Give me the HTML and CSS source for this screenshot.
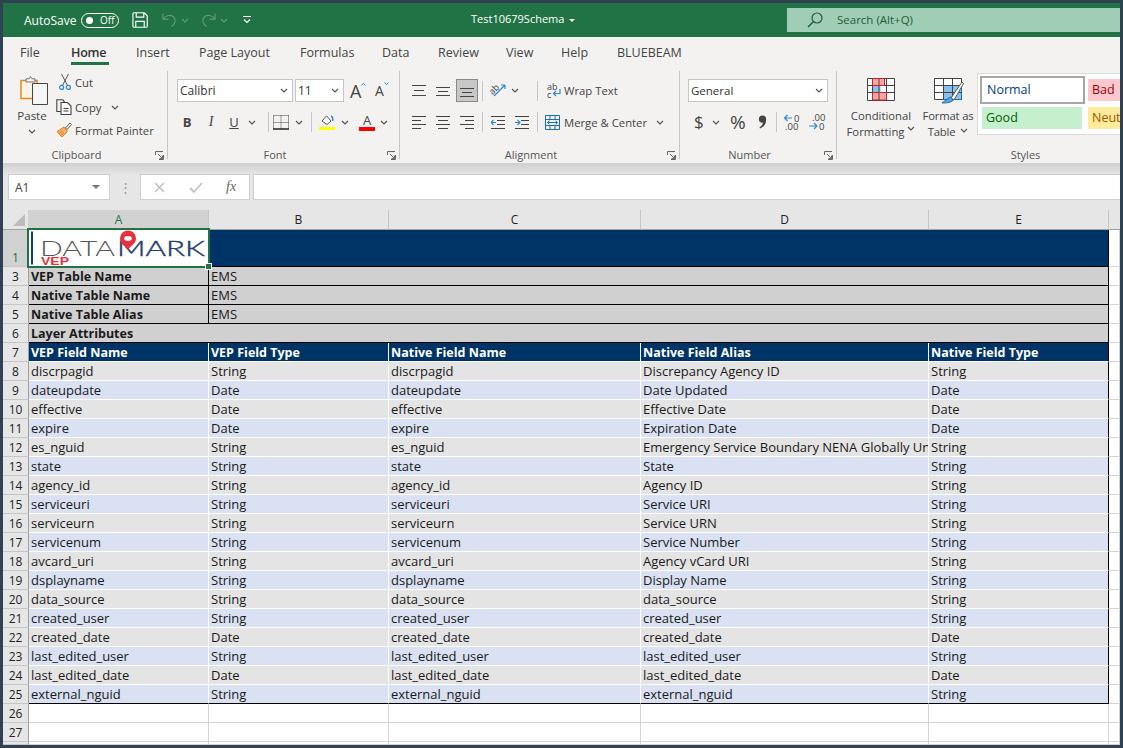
FILE: index.html
```html
<!DOCTYPE html>
<html lang="en">
<head>
<meta charset="utf-8">
<title>Test10679Schema</title>
<link rel="stylesheet" href="styles.css">
</head>
<body>
<svg class="defs" width="0" height="0" aria-hidden="true">
  <symbol id="chev" viewBox="0 0 8 5"><path d="M1 1l3 3 3-3" fill="none" stroke="currentColor" stroke-width="1.2"/></symbol>
  <symbol id="launch" viewBox="0 0 9 9"><path d="M.5 4V.5H8M8.5 4v4.5H4M3 3l4 4M7.5 4.5v3h-3" fill="none" stroke="#666"/></symbol>
  <symbol id="a-top" viewBox="0 0 14 14"><path d="M0 1.5h14M2 6.5h10M0 11.5h14" stroke="#444" fill="none"/></symbol>
  <symbol id="a-mid" viewBox="0 0 14 14"><path d="M0 3.5h14M2 7.5h10M0 11.5h14" stroke="#444" fill="none"/></symbol>
  <symbol id="a-bot" viewBox="0 0 14 14"><path d="M0 4.5h14M2 8.5h10M0 12.5h14" stroke="#444" fill="none"/></symbol>
  <symbol id="h-left" viewBox="0 0 14 14"><path d="M0 1.5h14M0 5.5h9M0 9.5h14M0 13.5h9" stroke="#444" fill="none"/></symbol>
  <symbol id="h-mid" viewBox="0 0 14 14"><path d="M0 1.5h14M2 5.5h10M0 9.5h14M2 13.5h10" stroke="#444" fill="none"/></symbol>
  <symbol id="h-right" viewBox="0 0 14 14"><path d="M0 1.5h14M5 5.5h9M0 9.5h14M5 13.5h9" stroke="#444" fill="none"/></symbol>
</svg>
<div class="window">

  <header class="titlebar">
    <span class="autosave">AutoSave</span>
    <span class="toggle"><i class="knob"></i><span>Off</span></span>
    <svg class="ic-save" width="16" height="16" viewBox="0 0 17 17"><path d="M2 .8h11l3.2 3.2v11.2a1 1 0 0 1-1 1H2a1 1 0 0 1-1-1V1.800a1 1 0 0 1 1-1zM4.500 1v4.500h8V1M4 16v-6h9v6" fill="none" stroke="#fff" stroke-width="1.200"/></svg>
    <svg class="ic-undo" width="15" height="16" viewBox="0 0 16 16"><path d="M1 1v6h6M1.500 6.500C4 3 9 2 12 4.500c3.300 2.800 2.500 7.500-2 10.500" fill="none" stroke="#5c9a7a" stroke-width="1.200"/></svg>
    <svg class="ic-chev dim"><use href="#chev"/></svg>
    <svg class="ic-redo" width="15" height="16" viewBox="0 0 16 16"><path d="M15 1v6H9M14.500 6.500C12 3 7 2 4 4.500.7 7.300 1.500 12 6 15" fill="none" stroke="#5c9a7a" stroke-width="1.200"/></svg>
    <svg class="ic-chev dim"><use href="#chev"/></svg>
    <svg class="ic-qat" width="8" height="8" viewBox="0 0 8 8"><path d="M0 .5h8M1 3.500l3 3 3-3" fill="none" stroke="#fff" stroke-width="1.100"/></svg>
    <span class="doc-title">Test10679Schema</span>
    <i class="caret-white"></i>
    <div class="search">
      <svg width="16" height="16" viewBox="0 0 16 16"><circle cx="10" cy="6" r="5" fill="none" stroke="#1f5d3c" stroke-width="1.200"/><path d="M6.300 9.700L1 15" stroke="#1f5d3c" stroke-width="1.400"/></svg>
      <span>Search (Alt+Q)</span>
    </div>
  </header>

  <nav class="tabs">
    <span class="tab t-file">File</span>
    <span class="tab t-home">Home</span>
    <span class="tab t-insert">Insert</span>
    <span class="tab t-layout">Page Layout</span>
    <span class="tab t-formulas">Formulas</span>
    <span class="tab t-data">Data</span>
    <span class="tab t-review">Review</span>
    <span class="tab t-view">View</span>
    <span class="tab t-help">Help</span>
    <span class="tab t-blue">BLUEBEAM</span>
  </nav>

  <section class="ribbon">
    <div class="group g-clip">
      <div class="clip-body">
        <div class="paste">
          <svg class="paste-ic" width="28" height="30" viewBox="0 0 28 30"><path d="M1 5.500h16v18H1z" fill="#fbf3e6" stroke="#e08a1e" stroke-width="1.500"/><path d="M6 5.500V3.800h3L10.500 1.500 12 3.800h3v3.200H6z" fill="#f3f2f1" stroke="#777"/><path d="M12.500 8.500h15v21h-15z" fill="#f7f7f7" stroke="#444"/></svg>
          <span class="paste-label">Paste</span>
          <svg class="ic-chev"><use href="#chev"/></svg>
        </div>
        <div class="clip-list">
          <div class="clip-item clip-cut">
            <svg width="12" height="16" viewBox="0 0 12 16"><path d="M2.500 0l6 11.500M9.500 0l-6 11.500" stroke="#555" fill="none"/><circle cx="2.600" cy="13.400" r="2" fill="none" stroke="#2b88d8" stroke-width="1.200"/><circle cx="9.400" cy="13.400" r="2" fill="none" stroke="#2b88d8" stroke-width="1.200"/></svg>
            <span>Cut</span>
          </div>
          <div class="clip-item clip-copy">
            <svg width="16" height="16" viewBox="0 0 16 16"><path d="M5 12.500H.8V.8h6l2 2.500" fill="none" stroke="#444" stroke-width="1.100"/><path d="M5 3.500h6.500l3.500 3.500v8.500H5z" fill="#f8f8f8" stroke="#444" stroke-width="1.100"/><path d="M7.500 9.500h5M7.500 12h5" stroke="#444"/></svg>
            <span>Copy</span>
            <svg class="ic-chev push"><use href="#chev"/></svg>
          </div>
          <div class="clip-item clip-fp">
            <svg width="16" height="16" viewBox="0 0 16 16"><path d="M1 9.500L8 5l3.500 4.500L6 15z" fill="#f4b26a" stroke="#e0821e"/><path d="M3 11.500l4-2.500M4.500 13.500L8 11" stroke="#e0821e"/><path d="M9.500 6l4.500-5 1.500 1.500-4.500 5z" fill="#fff" stroke="#555"/></svg>
            <span>Format Painter</span>
          </div>
        </div>
      </div>
      <div class="glabel gl-offset">Clipboard</div>
      <svg class="launcher"><use href="#launch"/></svg>
    </div>

    <div class="group g-font">
      <div class="row row-1">
        <div class="select w-font"><span>Calibri</span><svg class="ic-chev"><use href="#chev"/></svg></div>
        <div class="select w-size"><span>11</span><svg class="ic-chev"><use href="#chev"/></svg></div>
        <span class="grow-a">A<svg width="5" height="3" viewBox="0 0 5 3"><path d="M.5 2.500l2-2 2 2" fill="none" stroke="#2b88d8"/></svg></span>
        <span class="shrink-a">A<svg width="5" height="3" viewBox="0 0 5 3"><path d="M.5.500l2 2 2-2" fill="none" stroke="#2b88d8"/></svg></span>
      </div>
      <div class="row row-2 font-tools">
        <span class="fmt fmt-b">B</span>
        <span class="fmt fmt-i">I</span>
        <span class="fmt fmt-u">U</span>
        <svg class="ic-chev m-u"><use href="#chev"/></svg>
        <i class="vsep m-s1"></i>
        <svg class="m-bd" width="16" height="15" viewBox="0 0 16 15"><path d="M.5.500h15M.5 7.500h15M8 .5v13M.5.500v13M15.500.5v13" stroke="#444" stroke-dasharray="1 1" fill="none"/><path d="M0 14h16" stroke="#222" stroke-width="1.500"/></svg>
        <svg class="ic-chev m-c6"><use href="#chev"/></svg>
        <i class="vsep m-s2"></i>
        <svg class="m-fill" width="16" height="16" viewBox="0 0 16 16"><path d="M3 7l4.500-5L12 7l-4 3.500z" fill="#fff" stroke="#555"/><path d="M12 2c2 1 2 3 1.500 5" stroke="#2b88d8" stroke-width="1.500" fill="none"/><path d="M0 13h16v3H0z" fill="#ffff00"/></svg>
        <svg class="ic-chev m-c6"><use href="#chev"/></svg>
        <span class="color-a"><span>A</span><i></i></span>
        <svg class="ic-chev m-c5"><use href="#chev"/></svg>
      </div>
      <div class="glabel gl-offset">Font</div>
      <svg class="launcher"><use href="#launch"/></svg>
    </div>

    <div class="group g-align">
      <div class="align-grid">
        <div class="row a-row-1">
          <svg class="alg"><use href="#a-top"/></svg>
          <svg class="alg m10"><use href="#a-mid"/></svg>
          <span class="pressed"><svg class="alg"><use href="#a-bot"/></svg></span>
          <i class="vsep vs-a"></i>
          <svg class="m-or" width="17" height="15" viewBox="0 0 17 15"><path d="M1 13L12 2M12 2H8M12 2v4" transform="translate(3 0)" fill="none" stroke="#2b88d8" stroke-width="1.200"/><text x="0" y="10" class="or-text" transform="rotate(-45 4 8)">ab</text></svg>
          <svg class="ic-chev m-c4"><use href="#chev"/></svg>
          <i class="vsep vs-b"></i>
          <svg class="m-wrap" width="14" height="16" viewBox="0 0 14 16"><text x="0" y="7" class="wrap-text">ab</text><text x="0" y="15" class="wrap-text">c</text><path d="M13 6v4.500H7M9 8l-2.500 2.500L9 13" fill="none" stroke="#2b88d8" stroke-width="1.200"/></svg>
          <span class="label m3">Wrap Text</span>
        </div>
        <div class="row a-row-2">
          <svg class="alg"><use href="#h-left"/></svg>
          <svg class="alg m10"><use href="#h-mid"/></svg>
          <svg class="alg m10"><use href="#h-right"/></svg>
          <i class="vsep vs-c"></i>
          <svg class="alg m-ind1" viewBox="0 0 14 14"><path d="M0 1.500h14M6 5.500h8M6 9.500h8M0 13.500h14" stroke="#444" fill="none"/><path d="M5 7.500H0M2.500 5L0 7.500 2.500 10" stroke="#2b88d8" fill="none" stroke-width="1.200"/></svg>
          <svg class="alg m10" viewBox="0 0 14 14"><path d="M0 1.500h14M6 5.500h8M6 9.500h8M0 13.500h14" stroke="#444" fill="none"/><path d="M0 7.500h5M2.500 5L5 7.500 2.500 10" stroke="#2b88d8" fill="none" stroke-width="1.200"/></svg>
          <i class="vsep vs-d"></i>
          <svg class="m-merge" width="15" height="15" viewBox="0 0 15 15"><path d="M.5.500h14v14H.5zM.5 4.500h14M.5 10.500h14M5 .5v4M10 .5v4M5 10.500v4M10 10.500v4" fill="#f3f2f1" stroke="#1e6fb5"/><path d="M2.500 7.500h10M4.500 5.800l-2 1.700 2 1.700M10.500 5.800l2 1.700-2 1.700" fill="none" stroke="#1e6fb5"/></svg>
          <span class="label m4">Merge &amp; Center</span>
          <svg class="ic-chev m-mc"><use href="#chev"/></svg>
        </div>
      </div>
      <div class="glabel gl-offset">Alignment</div>
      <svg class="launcher"><use href="#launch"/></svg>
    </div>

    <div class="group g-num">
      <div class="row row-1">
        <div class="select w-gen"><span>General</span><svg class="ic-chev"><use href="#chev"/></svg></div>
      </div>
      <div class="row row-2">
        <span class="num-sym m-dol">$</span>
        <svg class="ic-chev m-c7"><use href="#chev"/></svg>
        <span class="num-sym m-pct">%</span>
        <svg class="m-comma" width="9" height="14" viewBox="0 0 9 14"><circle cx="4.500" cy="4.200" r="3.600" fill="#444"/><path d="M8 4.500c.3 4-2 7.500-6 9l-.6-1c2.500-1.500 3.800-3.500 3.600-6z" fill="#444"/></svg>
        <i class="vsep m-s3"></i>
        <svg class="m-d1" width="17" height="16" viewBox="0 0 17 16"><path d="M0 4h8M3.500 1L.5 4l3 3" stroke="#2b88d8" fill="none" stroke-width="1.200"/><text x="10" y="8" class="dec-text">0</text><text x="1" y="16" class="dec-text">.00</text></svg>
        <svg class="m-d2" width="17" height="16" viewBox="0 0 17 16"><text x="3" y="7" class="dec-text">.00</text><path d="M0 12h8M5 9l3 3-3 3" stroke="#2b88d8" fill="none" stroke-width="1.200"/><text x="10" y="16" class="dec-text">0</text></svg>
      </div>
      <div class="glabel gl-offset">Number</div>
      <svg class="launcher"><use href="#launch"/></svg>
    </div>

    <div class="group g-styles">
      <div class="styles-body">
        <div class="big-btn b-cond">
          <svg width="28" height="23" viewBox="0 0 28 23"><path d="M.5.500h27v22H.5z" fill="#fff" stroke="#444"/><path d="M5.500.5h12v7h-12z" fill="#f9a5a5"/><path d="M5.500 7.500h8v7h-8z" fill="#8cc0ec"/><path d="M5.500 14.500h14v7.500h-14z" fill="#f9a5a5"/><path d="M.5 7.500h27M.5 14.500h27M5.500.5v22M12 .5v22M19.500.5v22" stroke="#444" fill="none"/><path d="M5.500.5h12v7h-12zM5.500 14.500h14v7.500h-14z" fill="none" stroke="#d21f1f"/></svg>
          <span class="btn-text">Conditional</span>
          <span class="btn-text">Formatting<svg class="ic-chev c-in"><use href="#chev"/></svg></span>
        </div>
        <div class="big-btn b-table">
          <svg width="30" height="26" viewBox="0 0 30 26"><path d="M.5.500h27v21H.5z" fill="#fff" stroke="#444"/><path d="M9.500 7.500h18v14h-18z" fill="#8cc0ec" stroke="#1e6fb5"/><path d="M.5 7.500h27M.5 14.500h27M9.500.5v21M18.500.5v21" stroke="#444" fill="none"/><path d="M17 20l11-16 1.500 1.500L20 22z" fill="#fff" stroke="#555"/><path d="M8 25c3 0 8 0 11-2.500L17 19c-3 1-5 3-9 6z" fill="#5aa2dd" stroke="#1e6fb5"/></svg>
          <span class="btn-text">Format as</span>
          <span class="btn-text">Table<svg class="ic-chev c-in"><use href="#chev"/></svg></span>
        </div>
        <div class="gallery">
          <div class="gal-row">
            <span class="sty sty-normal">Normal</span>
            <span class="sty sty-bad">Bad</span>
          </div>
          <div class="gal-row gal-row-2">
            <span class="sty sty-good">Good</span>
            <span class="sty sty-neutral">Neutral</span>
          </div>
        </div>
      </div>
      <div class="glabel glabel-styles">Styles</div>
    </div>
  </section>

  <div class="shadow"></div>

  <section class="formula-bar">
    <div class="namebox"><span>A1</span><i class="caret-grey"></i></div>
    <span class="dots">⋮</span>
    <div class="fx-box">
      <svg width="11" height="11" viewBox="0 0 11 11"><path d="M1 1l9 9M10 1l-9 9" stroke="#bdbdbd" stroke-width="1.300"/></svg>
      <svg class="m-check" width="14" height="11" viewBox="0 0 14 11"><path d="M1 6l4 4 8-9" fill="none" stroke="#c4c4c4" stroke-width="1.800"/></svg>
      <span class="fx">fx</span>
    </div>
    <div class="formula-input"></div>
  </section>

  <main class="sheet">
    <div class="corner"><i></i></div>
    <div class="ch ch-active">A</div><div class="ch">B</div><div class="ch">C</div><div class="ch">D</div><div class="ch">E</div><div class="ch ch-last"></div>

    <div class="rh rh-active rh-tall">1</div>
    <div class="c logo-cell">
      <svg class="logo" width="178" height="36" viewBox="0 0 178 36"><path d="M2 1.500h2v33H2z" fill="#123a6b"/><text x="11" y="26" class="logo-data" textLength="75" lengthAdjust="spacingAndGlyphs">DATA</text><text x="88" y="26" class="logo-mark" textLength="88" lengthAdjust="spacingAndGlyphs">MARK</text><text x="12" y="35" class="logo-vep" textLength="28" lengthAdjust="spacingAndGlyphs">VEP</text><path d="M99 20c-2.500-4.500-8-6-8-11.500a8 8 0 0 1 16 0c0 5.500-5.500 7-8 11.500z" fill="#e8303f"/><ellipse cx="99" cy="8.500" rx="3.800" ry="2.400" fill="#fff"/></svg>
      <i class="selection"><i class="handle"></i></i>
    </div>
    <div class="c navy span4"></div><div class="c f"></div>

    <div class="rh">3</div><div class="c meta b">VEP Table Name</div><div class="c meta span4">EMS</div><div class="c f"></div>
    <div class="rh">4</div><div class="c meta b">Native Table Name</div><div class="c meta span4">EMS</div><div class="c f"></div>
    <div class="rh">5</div><div class="c meta b">Native Table Alias</div><div class="c meta span4">EMS</div><div class="c f"></div>
    <div class="rh">6</div><div class="c meta b span5">Layer Attributes</div><div class="c f"></div>
    <div class="rh">7</div><div class="c hd">VEP Field Name</div><div class="c hd">VEP Field Type</div><div class="c hd">Native Field Name</div><div class="c hd">Native Field Alias</div><div class="c hd hd-end">Native Field Type</div><div class="c f"></div>

    <div class="rh">8</div><div class="c g">discrpagid</div><div class="c g">String</div><div class="c g">discrpagid</div><div class="c g">Discrepancy Agency ID</div><div class="c g e">String</div><div class="c f"></div>
    <div class="rh">9</div><div class="c u">dateupdate</div><div class="c u">Date</div><div class="c u">dateupdate</div><div class="c u">Date Updated</div><div class="c u e">Date</div><div class="c f"></div>
    <div class="rh">10</div><div class="c g">effective</div><div class="c g">Date</div><div class="c g">effective</div><div class="c g">Effective Date</div><div class="c g e">Date</div><div class="c f"></div>
    <div class="rh">11</div><div class="c u">expire</div><div class="c u">Date</div><div class="c u">expire</div><div class="c u">Expiration Date</div><div class="c u e">Date</div><div class="c f"></div>
    <div class="rh">12</div><div class="c g">es_nguid</div><div class="c g">String</div><div class="c g">es_nguid</div><div class="c g">Emergency Service Boundary NENA Globally Unique ID</div><div class="c g e">String</div><div class="c f"></div>
    <div class="rh">13</div><div class="c u">state</div><div class="c u">String</div><div class="c u">state</div><div class="c u">State</div><div class="c u e">String</div><div class="c f"></div>
    <div class="rh">14</div><div class="c g">agency_id</div><div class="c g">String</div><div class="c g">agency_id</div><div class="c g">Agency ID</div><div class="c g e">String</div><div class="c f"></div>
    <div class="rh">15</div><div class="c u">serviceuri</div><div class="c u">String</div><div class="c u">serviceuri</div><div class="c u">Service URI</div><div class="c u e">String</div><div class="c f"></div>
    <div class="rh">16</div><div class="c g">serviceurn</div><div class="c g">String</div><div class="c g">serviceurn</div><div class="c g">Service URN</div><div class="c g e">String</div><div class="c f"></div>
    <div class="rh">17</div><div class="c u">servicenum</div><div class="c u">String</div><div class="c u">servicenum</div><div class="c u">Service Number</div><div class="c u e">String</div><div class="c f"></div>
    <div class="rh">18</div><div class="c g">avcard_uri</div><div class="c g">String</div><div class="c g">avcard_uri</div><div class="c g">Agency vCard URI</div><div class="c g e">String</div><div class="c f"></div>
    <div class="rh">19</div><div class="c u">dsplayname</div><div class="c u">String</div><div class="c u">dsplayname</div><div class="c u">Display Name</div><div class="c u e">String</div><div class="c f"></div>
    <div class="rh">20</div><div class="c g">data_source</div><div class="c g">String</div><div class="c g">data_source</div><div class="c g">data_source</div><div class="c g e">String</div><div class="c f"></div>
    <div class="rh">21</div><div class="c u">created_user</div><div class="c u">String</div><div class="c u">created_user</div><div class="c u">created_user</div><div class="c u e">String</div><div class="c f"></div>
    <div class="rh">22</div><div class="c g">created_date</div><div class="c g">Date</div><div class="c g">created_date</div><div class="c g">created_date</div><div class="c g e">Date</div><div class="c f"></div>
    <div class="rh">23</div><div class="c u">last_edited_user</div><div class="c u">String</div><div class="c u">last_edited_user</div><div class="c u">last_edited_user</div><div class="c u e">String</div><div class="c f"></div>
    <div class="rh">24</div><div class="c g">last_edited_date</div><div class="c g">Date</div><div class="c g">last_edited_date</div><div class="c g">last_edited_date</div><div class="c g e">Date</div><div class="c f"></div>
    <div class="rh">25</div><div class="c u l">external_nguid</div><div class="c u l">String</div><div class="c u l">external_nguid</div><div class="c u l">external_nguid</div><div class="c u e l">String</div><div class="c f"></div>

    <div class="rh">26</div><div class="c f"></div><div class="c f"></div><div class="c f"></div><div class="c f"></div><div class="c f"></div><div class="c f"></div>
    <div class="rh">27</div><div class="c f"></div><div class="c f"></div><div class="c f"></div><div class="c f"></div><div class="c f"></div><div class="c f"></div>
    <div class="rh"></div><div class="c f"></div><div class="c f"></div><div class="c f"></div><div class="c f"></div><div class="c f"></div><div class="c f"></div>
  </main>
</div>
</body>
</html>
```
FILE: styles.css
```css
* { box-sizing: border-box; }
html, body { margin: 0; padding: 0; }
body { width: 1123px; height: 748px; overflow: hidden; font-family: "Open Sans", "Noto Sans", sans-serif; color: #444; }
.defs { position: absolute; }
svg { display: block; flex: none; }
i { display: block; }

.window { width: 1123px; height: 748px; border: 3px solid #2f4152; display: flex; flex-direction: column; overflow: hidden; background: #fff; }

/* title bar */
.titlebar { flex: 0 0 34px; background: #217346; display: flex; align-items: center; color: #fff; font-size: 12px; padding-left: 21px; }
.autosave { width: 57px; }
.toggle { width: 38px; height: 15px; border: 1px solid #fff; border-radius: 8px; display: flex; align-items: center; font-size: 10px; padding-left: 4px; gap: 7px; }
.knob { width: 7px; height: 7px; background: #fff; border-radius: 50%; }
.ic-save { margin-left: 13px; }
.ic-undo { margin-left: 14px; }
.ic-redo { margin-left: 12px; }
.ic-chev { width: 8px; height: 5px; color: #555; }
.ic-chev.dim { color: #5c9a7a; margin-left: 4px; }
.ic-qat { margin-left: 15px; }
.doc-title { margin-left: 220px; width: 92px; white-space: nowrap; font-size: 11px; line-height: 14px; margin-bottom: 2px; }
.caret-white { width: 0; height: 0; border: 3.500px solid transparent; border-top-color: #fff; border-bottom: 0; margin-left: 6px; }
.search { margin-left: 212px; flex: 1; height: 24px; background: #a0cdb5; display: flex; align-items: center; padding-left: 20px; gap: 14px; color: #1f5d3c; font-size: 11.500px; }
.search span { margin-bottom: 2px; }

/* tabs */
.tabs { flex: 0 0 31px; background: #f3f2f1; display: flex; font-size: 12.500px; line-height: 31px; color: #444; }
.tab { white-space: nowrap; height: 28px; }
.t-file { margin-left: 17px; width: 51px; }
.t-home { width: 38px; margin-right: 27px; font-weight: 600; color: #333; border-bottom: 3px solid #217346; height: 28px; letter-spacing: -.2px; }
.t-insert { width: 63px; }
.t-layout { width: 101px; }
.t-formulas { width: 82px; }
.t-data { width: 56px; }
.t-review { width: 68px; }
.t-view { width: 55px; }
.t-help { width: 56px; }
.t-blue { width: 70px; }

/* ribbon */
.ribbon { flex: 0 0 95px; background: #f3f2f1; display: flex; padding: 3px 0 4px; font-size: 12px; color: #444; }
.group { position: relative; display: flex; flex-direction: column; border-right: 1px solid #c6c6c6; flex: none; }
.glabel { position: absolute; bottom: -4px; left: 0; right: 0; text-align: center; font-size: 11px; line-height: 16px; color: #555; }
.gl-offset { padding-right: 17px; }
.launcher { position: absolute; width: 9px; height: 9px; right: 3px; bottom: -1px; }
.row { display: flex; align-items: center; }
.g-clip { width: 165px; }
.g-font { width: 232px; padding-left: 9px; }
.g-align { width: 280px; }
.g-num { width: 157px; padding-left: 8px; }
.g-styles { flex: 1; border-right: 0; }

.clip-body { display: flex; padding-left: 15px; }
.paste { width: 28px; padding-top: 4px; display: flex; flex-direction: column; align-items: center; }
.paste-ic { align-self: flex-start; margin-left: 2px; }
.paste .ic-chev { margin-top: 6px; }
.paste-label { margin-top: 3px; font-size: 11.500px; line-height: 15px; }
.clip-list { margin-left: 10px; }
.clip-item { display: flex; align-items: center; height: 24px; gap: 3px; font-size: 11.300px; white-space: nowrap; }
.clip-cut { padding-left: 3px; height: 22px; gap: 4px; }
.clip-copy { height: 24px; margin-top: 2px; }
.clip-copy .push { margin-left: 7px; }
.clip-fp { margin-top: -1px; }

.row-1 { height: 23px; margin-top: 8px; }
.row-2 { height: 22px; margin-top: 9px; }
.select { height: 23px; background: #fff; border: 1px solid #c6c6c6; display: flex; align-items: center; justify-content: space-between; padding: 0 4px 0 2px; font-size: 12px; color: #333; }
.w-font { width: 116px; }
.w-size { width: 49px; margin-left: 2px; }
.w-gen { width: 140px; font-size: 11.500px; }
.grow-a, .shrink-a { display: flex; align-items: flex-start; font-size: 18px; line-height: 22px; color: #444; }
.grow-a { margin-left: 6px; width: 17px; }
.shrink-a { margin-left: 8px; font-size: 14px; line-height: 24px; }
.grow-a svg, .shrink-a svg { margin-top: 3px; }
.fmt { width: 12px; text-align: center; font-size: 13px; line-height: 22px; color: #444; }
.fmt-b { margin-left: 4px; font-weight: 700; }
.fmt-i { margin-left: 12px; font-family: "Liberation Serif", serif; font-style: italic; font-size: 14px; }
.fmt-u { margin-left: 11px; text-decoration: underline; }
.m-u { margin-left: 8px; }
.vsep { width: 1px; height: 20px; background: #c6c6c6; }
.m-s1 { margin-left: 12px; }
.m-bd { margin-left: 4px; }
.m-c6 { margin-left: 6px; }
.m-c5 { margin-left: 5px; }
.m-c4 { margin-left: 4px; }
.m-c7 { margin-left: 7px; }
.m-s2 { margin-left: 8px; }
.m-fill { margin-left: 7px; }
.color-a { margin-left: 10px; width: 16px; display: flex; flex-direction: column; align-items: center; font-size: 13px; line-height: 14px; color: #444; }
.color-a i { width: 16px; height: 4px; background: #ff0000; }

.align-grid { padding-left: 12px; }
.a-row-1 { height: 23px; margin-top: 8px; }
.a-row-2 { height: 22px; margin-top: 9px; }
.alg { width: 14px; height: 14px; }
.m10 { margin-left: 10px; }
.pressed { width: 22px; height: 23px; margin-left: 6px; background: #c8c8c8; border: 1px solid #8a8a8a; display: flex; align-items: center; justify-content: center; }
.vs-a { margin-left: 4px; }
.m-or { margin-left: 7px; }
.or-text { font-size: 9px; fill: #444; font-family: "Open Sans", sans-serif; }
.vs-b { margin-left: 18px; }
.m-wrap { margin-left: 9px; }
.wrap-text { font-size: 9px; fill: #444; font-family: "Open Sans", sans-serif; }
.label { white-space: nowrap; font-size: 11.300px; }
.m3 { margin-left: 3px; }
.m4 { margin-left: 4px; }
.vs-c { margin-left: 8px; }
.m-ind1 { margin-left: 8px; }
.vs-d { margin-left: 8px; }
.m-merge { margin-left: 7px; }
.m-mc { margin-left: 9px; }
.num-sym { font-size: 17px; line-height: 22px; color: #444; }
.m-dol { margin-left: 6px; width: 11px; }
.m-pct { margin-left: 10px; width: 18px; font-size: 19px; }
.m-comma { margin-left: 10px; }
.m-s3 { margin-left: 9px; }
.m-d1 { margin-left: 7px; }
.m-d2 { margin-left: 8px; }
.dec-text { font-size: 9.500px; fill: #444; font-family: "Open Sans", sans-serif; }

.styles-body { display: flex; }
.big-btn { display: flex; flex-direction: column; align-items: center; font-size: 11.300px; line-height: 16px; white-space: nowrap; padding-top: 7px; flex: none; }
.big-btn svg:first-child { margin-bottom: 7px; }
.b-cond { width: 64px; margin-left: 12px; }
.b-table { width: 52px; margin-left: 9px; letter-spacing: -.2px; }
.b-table svg:first-child { margin-bottom: 4px; margin-left: 2px; }
.btn-text { display: flex; align-items: center; gap: 3px; }
.c-in { display: block; }
.gallery { margin-left: 3px; margin-top: 2px; width: 146px; height: 62px; background: #fff; border: 1px solid #dadada; border-right: 0; padding: 2px 0 0 2px; overflow: hidden; flex: none; }
.gal-row { display: flex; height: 28px; white-space: nowrap; }
.gal-row-2 { margin-top: 3px; height: 22px; }
.sty { display: block; font-size: 12.500px; line-height: 22px; padding-left: 4px; flex: none; }
.sty-normal { width: 105px; height: 28px; border: 2px solid #a6a6a6; color: #003e75; line-height: 24px; padding-left: 5px; }
.sty-bad { width: 60px; height: 22px; margin: 3px 0 0 3px; background: #ffc7ce; color: #9c0006; }
.sty-good { width: 100px; margin-left: 2px; background: #c6efce; color: #006100; }
.sty-neutral { width: 60px; margin-left: 6px; background: #ffeb9c; color: #9c5700; }
.glabel-styles { left: 0; padding-left: 91px; }

.shadow { flex: 0 0 11px; background: linear-gradient(#d0d0d0, #e4e4e4); }

/* formula bar */
.formula-bar { flex: 0 0 36px; background: #e6e6e6; display: flex; align-items: flex-start; }
.namebox { margin-left: 5px; width: 102px; height: 26px; background: #fff; border: 1px solid #cfcfcf; display: flex; align-items: center; justify-content: space-between; padding: 0 9px 0 6px; font-size: 12px; color: #444; }
.caret-grey { width: 0; height: 0; border: 4px solid transparent; border-top: 4px solid #777; border-bottom: 0; }
.dots { width: 30px; text-align: center; font-size: 13px; line-height: 26px; color: #999; }
.fx-box { width: 110px; height: 26px; background: #fff; border: 1px solid #cfcfcf; display: flex; align-items: center; padding-left: 13px; }
.m-check { margin-left: 24px; }
.fx { margin-left: 23px; font-family: "Liberation Serif", serif; font-style: italic; font-size: 14px; color: #666; }
.formula-input { margin-left: 3px; flex: 1; height: 26px; background: #fff; border: 1px solid #cfcfcf; border-right: 0; }

/* sheet */
.sheet { flex: 1; display: grid; grid-template-columns: 26px 180px 180px 252px 288px 180px 11px; grid-template-rows: 20px 37px repeat(25, 19px) 3px; font-family: "Open Sans", "Noto Sans", sans-serif; font-size: 13px; color: #1a1a1a; }
.corner { background: #e6e6e6; border-right: 1px solid #d0d0d0; border-bottom: 1px solid #a0a0a0; position: relative; display: flex; justify-content: flex-end; align-items: flex-end; padding: 0 3px 3px 0; }
.corner i { width: 0; height: 0; border-style: solid; border-width: 0 0 12px 12px; border-color: transparent transparent #bcbcbc transparent; }
.ch { background: #e6e6e6; border-right: 1px solid #c6c6c6; border-bottom: 1px solid #a0a0a0; text-align: center; line-height: 19px; color: #222; font-size: 12px; }
.ch-active { background: #d2d2d2; color: #217346; }
.ch-last { border-right: 0; }
.rh { background: #e6e6e6; border-right: 1px solid #a0a0a0; border-bottom: 1px solid #c6c6c6; text-align: center; line-height: 19px; font-size: 12px; color: #222; }
.rh-active { background: #d2d2d2; color: #217346; }
.rh-tall { line-height: 56px; }
.c { padding-left: 2px; line-height: 19px; white-space: nowrap; overflow: hidden; }
.span4 { grid-column: span 4; }
.span5 { grid-column: span 5; }
.f { background: #fff; border-right: 1px solid #d4d4d4; border-bottom: 1px solid #d4d4d4; }
.navy { background: #003366; border-bottom: 1px solid #000; border-right: 1px solid #000; }
.meta { background: #d0d0d0; border-right: 1px solid #000; border-bottom: 1px solid #000; }
.b { font-weight: 700; font-size: 12.500px; }
.hd { background: #003366; color: #fff; font-weight: 700; font-size: 12.500px; border-right: 1px solid #fff; border-bottom: 1px solid #fff; }
.hd-end { border-right: 1px solid #000; }
.g { background: #e4e4e4; border-right: 1px solid #fff; border-bottom: 1px solid #fff; }
.u { background: #d9e1f2; border-right: 1px solid #fff; border-bottom: 1px solid #fff; }
.e { border-right-color: #000; }
.l { border-bottom-color: #000; }
.logo-cell { background: #fff; overflow: visible; position: relative; padding: 0; border-bottom: 1px solid #000; }
.logo { display: block; }
.logo-data { font-family: "Lato", sans-serif; font-weight: 300; font-size: 21px; fill: #55585c; }
.logo-mark { font-family: "Lato", sans-serif; font-weight: 300; font-size: 21px; fill: #25406b; stroke: #25406b; stroke-width: .4px; }
.logo-vep { font-family: "Liberation Sans", sans-serif; font-weight: 700; font-size: 10.500px; fill: #ea2f3d; }
.selection { position: absolute; left: -2px; top: -2px; width: 183px; height: 40px; border: 2px solid #217346; pointer-events: none; }
.handle { position: absolute; right: -3px; bottom: -3px; width: 5px; height: 5px; background: #217346; outline: 1px solid #fff; }
```
